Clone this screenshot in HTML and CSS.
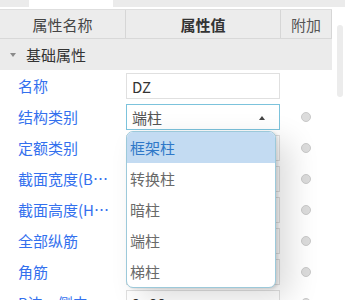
FILE: index.html
```html
<!DOCTYPE html>
<html lang="zh">
<head>
<meta charset="utf-8">
<link rel="stylesheet" href="styles.css">
</head>
<body>
<div class="topbar"><div class="tab"></div></div>
<div class="panel">
  <div class="table">
    <div class="row head">
      <div class="hc">属性名称</div>
      <div class="hc bold">属性值</div>
      <div class="hc last">附加</div>
    </div>
    <div class="cat"><span class="tri"></span>基础属性</div>
    <div class="row">
      <div class="label">名称</div>
      <div class="val"><div class="input">DZ</div></div>
      <div class="add"></div>
    </div>
    <div class="row">
      <div class="label">结构类别</div>
      <div class="val"><div class="input select">端柱<span class="arrow"></span></div></div>
      <div class="add"><span class="radio"></span></div>
    </div>
    <div class="row">
      <div class="label">定额类别</div>
      <div class="val"><div class="input"></div></div>
      <div class="add"><span class="radio"></span></div>
    </div>
    <div class="row">
      <div class="label">截面宽度(B边)(mm)</div>
      <div class="val"><div class="input"></div></div>
      <div class="add"><span class="radio"></span></div>
    </div>
    <div class="row">
      <div class="label">截面高度(H边)(mm)</div>
      <div class="val"><div class="input"></div></div>
      <div class="add"><span class="radio"></span></div>
    </div>
    <div class="row">
      <div class="label">全部纵筋</div>
      <div class="val"><div class="input"></div></div>
      <div class="add"><span class="radio"></span></div>
    </div>
    <div class="row">
      <div class="label">角筋</div>
      <div class="val"><div class="input"></div></div>
      <div class="add"><span class="radio"></span></div>
    </div>
    <div class="row">
      <div class="label">B边一侧中部筋</div>
      <div class="val"><div class="input">2⌀22</div></div>
      <div class="add"><span class="radio"></span></div>
    </div>
    <div class="dropdown">
      <div class="opt sel">框架柱</div>
      <div class="opt">转换柱</div>
      <div class="opt">暗柱</div>
      <div class="opt">端柱</div>
      <div class="opt">梯柱</div>
    </div>
  </div>
  <div class="scroll"></div>
</div>
</body>
</html>
```
FILE: styles.css
```css
html, body {
  margin: 0;
  padding: 0;
  background: #ffffff;
  overflow: hidden;
  width: 345px;
  height: 300px;
}
body {
  font-family: "Noto Sans CJK SC", "Noto Sans", sans-serif;
  font-size: 15px;
  color: #333;
}
.topbar {
  height: 7px;
  background: #ebebeb;
  display: flex;
}
.tab {
  margin-left: 29px;
  width: 84px;
  height: 7px;
  background: #fff;
}
.panel {
  display: flex;
  margin-top: 2px;
}
.table {
  position: relative;
  width: 332px;
}
.row {
  display: grid;
  grid-template-columns: 126px 155px 51px;
  height: 31px;
  align-items: center;
}
.head {
  height: 28px;
  background: #ececec;
  border-top: 1px solid #dedede;
  border-bottom: 1px solid #d8d8d8;
  align-items: stretch;
}
.hc {
  display: flex;
  align-items: center;
  justify-content: center;
  border-right: 1px solid #d6d6d6;
  color: #444;
}
.hc.bold {
  font-weight: bold;
  color: #333;
}
.hc.last {
  border-right: 1px solid #d6d6d6;
  color: #555;
}
.cat {
  height: 31px;
  background: #ebebeb;
  display: flex;
  align-items: center;
  color: #333;
}
.tri {
  width: 0;
  height: 0;
  border-left: 3px solid transparent;
  border-right: 3px solid transparent;
  border-top: 4px solid #8a8a8a;
  margin-left: 10px;
  margin-right: 10px;
}
.label {
  padding-left: 18px;
  color: #3370ee;
  white-space: nowrap;
  overflow: hidden;
  text-overflow: ellipsis;
  max-width: 92px;
}
.val {
  height: 100%;
  display: flex;
  align-items: center;
}
.input {
  box-sizing: border-box;
  width: 154px;
  height: 26px;
  margin-top: 1px;
  border: 1px solid #e0e0e0;
  padding-left: 5px;
  display: flex;
  align-items: center;
  color: #333;
  background: #fff;
}
.select {
  border-color: #7cc3dc;
  color: #555;
  position: relative;
}
.arrow {
  position: absolute;
  right: 14px;
  top: 11px;
  width: 0;
  height: 0;
  border-left: 3px solid transparent;
  border-right: 3px solid transparent;
  border-bottom: 4px solid #444;
}
.add {
  display: flex;
  justify-content: center;
  align-items: center;
  padding-right: 2px;
}
.radio {
  box-sizing: border-box;
  width: 10px;
  height: 10px;
  border-radius: 50%;
  background: #dcdcdc;
  border: 1px solid #c9c9c9;
}
.dropdown {
  position: absolute;
  left: 126px;
  top: 122px;
  width: 150px;
  box-sizing: border-box;
  border: 1px solid #9cc9da;
  border-radius: 7px;
  background: #fff;
  overflow: hidden;
  box-shadow: 14px 10px 30px rgba(0, 0, 0, 0.14), 2px 1px 3px rgba(0, 0, 0, 0.12);
}
.opt {
  height: 31px;
  display: flex;
  align-items: center;
  padding-left: 3px;
  color: #6a6a6a;
}
.opt.sel {
  background: #c3dbf2;
  color: #2f78c8;
}
.scroll {
  margin-left: 5px;
  margin-top: 16px;
  width: 6px;
  height: 72px;
  border-radius: 3px;
  background: #ececec;
}
```
